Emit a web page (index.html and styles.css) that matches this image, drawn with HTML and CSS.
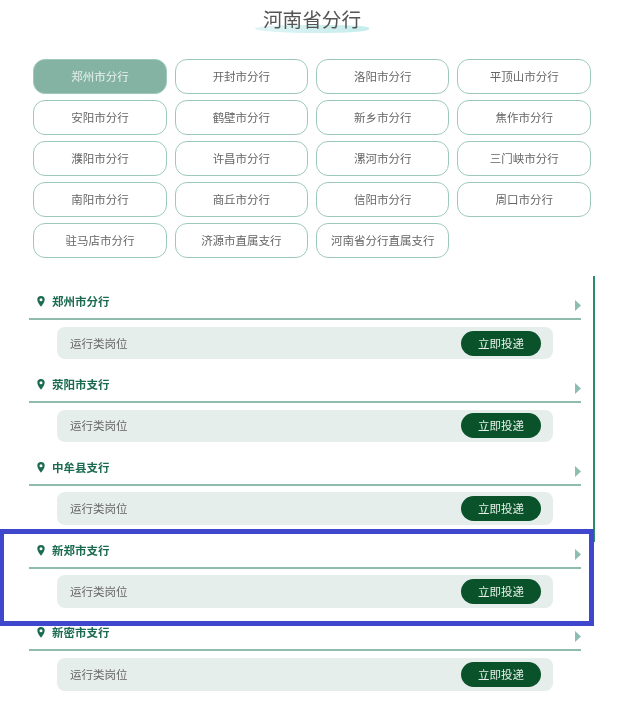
FILE: index.html
```html
<!DOCTYPE html>
<html lang="zh-CN">
<head>
<meta charset="utf-8">
<title>河南省分行</title>
<link rel="stylesheet" href="styles.css">
</head>
<body>
<main class="page">
  <header class="head"><h1 class="title">河南省分行</h1></header>
  <nav class="cities">
    <a class="city active">郑州市分行</a>
    <a class="city">开封市分行</a>
    <a class="city">洛阳市分行</a>
    <a class="city">平顶山市分行</a>
    <a class="city">安阳市分行</a>
    <a class="city">鹤壁市分行</a>
    <a class="city">新乡市分行</a>
    <a class="city">焦作市分行</a>
    <a class="city">濮阳市分行</a>
    <a class="city">许昌市分行</a>
    <a class="city">漯河市分行</a>
    <a class="city">三门峡市分行</a>
    <a class="city">南阳市分行</a>
    <a class="city">商丘市分行</a>
    <a class="city">信阳市分行</a>
    <a class="city">周口市分行</a>
    <a class="city">驻马店市分行</a>
    <a class="city">济源市直属支行</a>
    <a class="city">河南省分行直属支行</a>
  </nav>
  <section class="branches">
    <article class="branch">
      <div class="branch-head">
        <svg class="pin" viewBox="0 0 8 11"><path fill-rule="evenodd" d="M4 0a3.7 3.7 0 0 1 3.7 3.7C7.700 6 5.300 9 4 10.800 2.700 9 .3 6 .3 3.700A3.700 3.700 0 0 1 4 0Zm0 2.200a1.500 1.500 0 1 0 0 3 1.500 1.500 0 0 0 0-3Z"/></svg>
        <h2 class="branch-name">郑州市分行</h2>
        <svg class="arrow" viewBox="0 0 6 11"><path d="M0 0l6 5.500L0 11Z"/></svg>
      </div>
      <div class="job"><span class="job-name">运行类岗位</span><a class="apply">立即投递</a></div>
    </article>
    <article class="branch">
      <div class="branch-head">
        <svg class="pin" viewBox="0 0 8 11"><path fill-rule="evenodd" d="M4 0a3.7 3.7 0 0 1 3.7 3.7C7.700 6 5.300 9 4 10.800 2.700 9 .3 6 .3 3.700A3.700 3.700 0 0 1 4 0Zm0 2.200a1.500 1.500 0 1 0 0 3 1.500 1.500 0 0 0 0-3Z"/></svg>
        <h2 class="branch-name">荥阳市支行</h2>
        <svg class="arrow" viewBox="0 0 6 11"><path d="M0 0l6 5.500L0 11Z"/></svg>
      </div>
      <div class="job"><span class="job-name">运行类岗位</span><a class="apply">立即投递</a></div>
    </article>
    <article class="branch">
      <div class="branch-head">
        <svg class="pin" viewBox="0 0 8 11"><path fill-rule="evenodd" d="M4 0a3.7 3.7 0 0 1 3.7 3.7C7.700 6 5.300 9 4 10.800 2.700 9 .3 6 .3 3.700A3.700 3.700 0 0 1 4 0Zm0 2.200a1.500 1.500 0 1 0 0 3 1.500 1.500 0 0 0 0-3Z"/></svg>
        <h2 class="branch-name">中牟县支行</h2>
        <svg class="arrow" viewBox="0 0 6 11"><path d="M0 0l6 5.500L0 11Z"/></svg>
      </div>
      <div class="job"><span class="job-name">运行类岗位</span><a class="apply">立即投递</a></div>
    </article>
    <article class="branch">
      <div class="branch-head">
        <svg class="pin" viewBox="0 0 8 11"><path fill-rule="evenodd" d="M4 0a3.7 3.7 0 0 1 3.7 3.7C7.700 6 5.300 9 4 10.800 2.700 9 .3 6 .3 3.700A3.700 3.700 0 0 1 4 0Zm0 2.200a1.500 1.500 0 1 0 0 3 1.500 1.500 0 0 0 0-3Z"/></svg>
        <h2 class="branch-name">新郑市支行</h2>
        <svg class="arrow" viewBox="0 0 6 11"><path d="M0 0l6 5.500L0 11Z"/></svg>
      </div>
      <div class="job"><span class="job-name">运行类岗位</span><a class="apply">立即投递</a></div>
    </article>
    <article class="branch">
      <div class="branch-head">
        <svg class="pin" viewBox="0 0 8 11"><path fill-rule="evenodd" d="M4 0a3.7 3.7 0 0 1 3.7 3.7C7.700 6 5.300 9 4 10.800 2.700 9 .3 6 .3 3.700A3.700 3.700 0 0 1 4 0Zm0 2.200a1.500 1.500 0 1 0 0 3 1.500 1.500 0 0 0 0-3Z"/></svg>
        <h2 class="branch-name">新密市支行</h2>
        <svg class="arrow" viewBox="0 0 6 11"><path d="M0 0l6 5.500L0 11Z"/></svg>
      </div>
      <div class="job"><span class="job-name">运行类岗位</span><a class="apply">立即投递</a></div>
    </article>
  </section>
  <div class="highlight"></div>
</main>
</body>
</html>
```
FILE: styles.css
```css
* { box-sizing: border-box; }
html, body { margin: 0; height: 100%; }
body {
  background: #fff;
  color: #666;
  font-family: "Noto Sans CJK SC", "Noto Sans", sans-serif;
  overflow: hidden;
}
.page { position: relative; height: 711px; overflow: hidden; }
.head {
  display: flex;
  justify-content: center;
  height: 59px;
  padding: 5px 0 0 7px;
  filter: blur(0.3px);
}
.title {
  position: relative;
  z-index: 0;
  margin: 0;
  height: 28px;
  padding: 0 8px;
  color: #555;
  font-size: 19.6px;
  font-weight: 400;
  line-height: 28px;
}
.title::after {
  content: "";
  position: absolute;
  z-index: -1;
  left: 0;
  right: 0;
  top: 20px;
  height: 8px;
  border-radius: 50% 40% 50% 60%;
  background: linear-gradient(90deg, #dff4f4, #c6ecec);
}
.cities {
  display: grid;
  grid-template-columns: repeat(4, 133.4px);
  grid-auto-rows: 35px;
  column-gap: 8px;
  row-gap: 6px;
  margin-left: 33.3px;
  filter: blur(0.3px);
}
.city {
  display: flex;
  align-items: center;
  justify-content: center;
  padding-bottom: 2px;
  border: 1px solid #9cc9ba;
  border-radius: 12px;
  color: #666;
  font-size: 11.5px;
}
.city.active { background: #84b3a4; color: #e8f2ef; }
.branches {
  position: relative;
  margin-top: 19px;
  margin-left: 29px;
  width: 552px;
  filter: blur(0.3px);
}
.branches::after {
  content: "";
  position: absolute;
  left: 564px;
  top: -1px;
  width: 2px;
  height: 266px;
  background: #2e8b6c;
}
.branch { height: 82.85px; }
.branch-head {
  display: flex;
  align-items: center;
  height: 43px;
  padding: 0 0 0 8px;
  border-bottom: 2px solid #8fbcad;
}
.pin { width: 8px; height: 11px; margin-top: 8px; fill: #1b6b50; }
.branch-name {
  flex: 1;
  margin: 7px 0 0 7px;
  color: #1b6b50;
  font-size: 11.5px;
  font-weight: 700;
  line-height: 16px;
}
.arrow { width: 6px; height: 11px; margin-top: 16px; fill: #8dbcb0; }
.job {
  display: flex;
  align-items: center;
  justify-content: space-between;
  width: 496px;
  height: 32.7px;
  margin: 6.7px 0 0 28px;
  padding: 0 12px 0 13px;
  border-radius: 8px;
  background: #e6eeec;
}
.job-name { padding-bottom: 1px; font-size: 11.5px; color: #666; }
.apply {
  display: flex;
  align-items: center;
  justify-content: center;
  width: 80px;
  height: 25px;
  padding-bottom: 1px;
  border-radius: 13px;
  background: #0a5229;
  color: #e6f0ea;
  font-size: 11.5px;
}
.highlight {
  position: absolute;
  left: -1px;
  top: 529px;
  width: 595px;
  height: 97px;
  border: 5px solid #3f48cc;
}
```
